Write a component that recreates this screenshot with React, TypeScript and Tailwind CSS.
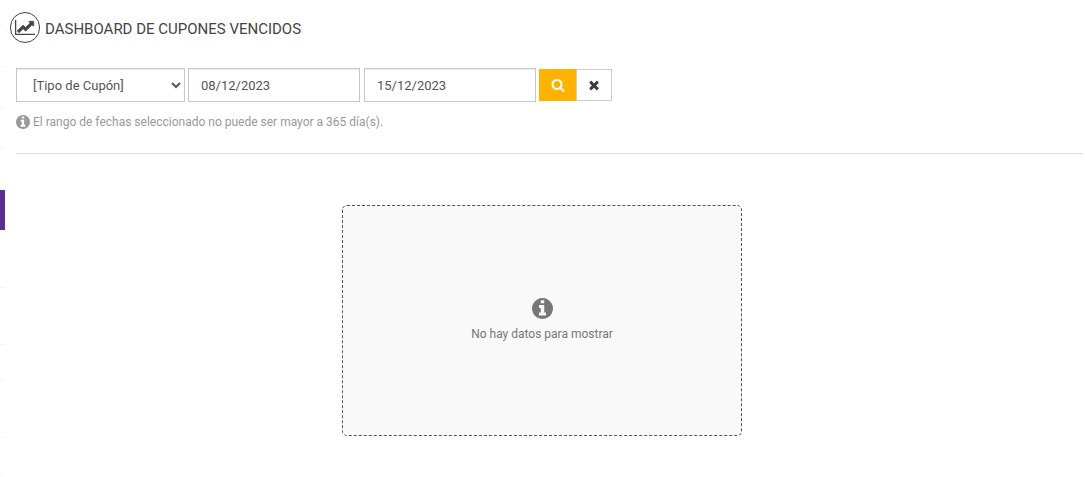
import React from "react";

type IconProps = { className?: string };

function LineChartIcon({ className }: IconProps) {
  return (
    <svg viewBox="0 0 2048 1536" className={className} fill="currentColor" aria-hidden="true">
      <path d="M2048 1408v128H0V0h128v1408z" />
      <path
        stroke="currentColor"
        strokeWidth="70"
        d="M1920 160v435q0 21-19.500 29.500T1865 617l-121-121-633 633q-10 10-23 10t-23-10L832 896l-416 416-192-192 585-585q10-10 23-10t23 10l233 233 464-464-121-121q-16-16-7.500-35.500T1453 128h435q14 0 23 9t9 23z"
      />
    </svg>
  );
}

function SearchIcon({ className }: IconProps) {
  return (
    <svg viewBox="0 0 1792 1792" className={className} fill="currentColor" aria-hidden="true">
      <path d="M1216 832q0-185-131.500-316.500T768 384 451.500 515.500 320 832t131.500 316.500T768 1280t316.500-131.500T1216 832zm512 832q0 52-38 90t-90 38q-54 0-90-38l-343-342q-179 124-399 124-143 0-273.500-55.500t-225-150-150-225T64 832t55.500-273.500 150-225 225-150T768 128t273.500 55.500 225 150 150 225T1472 832q0 220-124 399l343 343q37 37 37 90z" />
    </svg>
  );
}

function TimesIcon({ className }: IconProps) {
  return (
    <svg viewBox="0 0 1792 1792" className={className} fill="currentColor" aria-hidden="true">
      <path d="M1490 1322q0 40-28 68l-136 136q-28 28-68 28t-68-28l-294-294-294 294q-28 28-68 28t-68-28l-136-136q-28-28-28-68t28-68l294-294-294-294q-28-28-28-68t28-68l136-136q28-28 68-28t68 28l294 294 294-294q28-28 68-28t68 28l136 136q28 28 28 68t-28 68l-294 294 294 294q28 28 28 68z" />
    </svg>
  );
}

function InfoIcon({ className }: IconProps) {
  return (
    <svg viewBox="128 128 1536 1536" className={className} fill="currentColor" aria-hidden="true">
      <path d="M1152 1376v-160q0-14-9-23t-23-9h-96v-512q0-14-9-23t-23-9h-320q-14 0-23 9t-9 23v160q0 14 9 23t23 9h96v320h-96q-14 0-23 9t-9 23v160q0 14 9 23t23 9h448q14 0 23-9t9-23zm-128-896v-160q0-14-9-23t-23-9h-192q-14 0-23 9t-9 23v160q0 14 9 23t23 9h192q14 0 23-9t9-23zm640 416q0 209-103 385.500t-279.500 279.500-385.500 103-385.500-103-279.500-279.500-103-385.500 103-385.500 279.500-279.500 385.500-103 385.500 103 279.500 279.500 103 385.500z" />
    </svg>
  );
}

function SidebarEdge() {
  return (
    <div className="flex w-[5px] shrink-0 flex-col" aria-hidden="true">
      <div className="h-[26px] border-b border-[#f5f5f5]" />
      <div className="h-[41px] border-b border-[#f5f5f5]" />
      <div className="h-[41px] border-b border-[#f5f5f5]" />
      <div className="h-[41px] border-b border-[#f5f5f5]" />
      <div className="mt-[41px] h-10 bg-[#5c2d91]" />
      <div className="h-[58px] border-b border-[#f5f5f5]" />
      <div className="h-[57px] border-b border-[#f5f5f5]" />
      <div className="h-9 border-b border-[#f5f5f5]" />
      <div className="h-[57px] border-b border-[#f5f5f5]" />
      <div className="h-9 border-b border-[#f5f5f5]" />
    </div>
  );
}

const field =
  "h-[34px] rounded-none border border-[#c8c8c8] bg-white px-3 text-[13px] text-[#555] shadow-[inset_0_1px_1px_rgba(0,0,0,0.075)] outline-none";

export default function App() {
  return (
    <div className="flex min-h-screen bg-white font-['Roboto',sans-serif] text-[#444]">
      <SidebarEdge />
      <main className="min-w-0 flex-1">
        <header className="flex items-center gap-[5px] pt-3 pl-[5px]">
          <span className="flex h-[31px] w-[30px] items-center justify-center rounded-full border border-[#444]">
            <LineChartIcon className="h-[15px] w-5" />
          </span>
          <h1 className="pt-[2px] text-[15px] leading-5">DASHBOARD DE CUPONES VENCIDOS</h1>
        </header>

        <form
          className="mt-[25px] flex flex-wrap items-center gap-[3px] pl-[11px]"
          onSubmit={(event) => event.preventDefault()}
        >
          <select aria-label="Tipo de Cupón" className={`${field} w-[169px]`}>
            <option>[Tipo de Cupón]</option>
          </select>
          <div className="flex gap-1">
            <input
              type="text"
              aria-label="Fecha desde"
              defaultValue="08/12/2023"
              className={`${field} w-[172px]`}
            />
            <input
              type="text"
              aria-label="Fecha hasta"
              defaultValue="15/12/2023"
              className={`${field} w-[172px]`}
            />
          </div>
          <div className="flex h-8">
            <button
              type="submit"
              aria-label="Buscar"
              className="flex w-[37px] items-center justify-center bg-[#ffb300] text-white"
            >
              <SearchIcon className="size-[14px]" />
            </button>
            <button
              type="button"
              aria-label="Limpiar"
              className="flex w-9 items-center justify-center border border-[#ccc] bg-white text-[#3c3c3c]"
            >
              <TimesIcon className="size-[14px]" />
            </button>
          </div>
        </form>

        <p className="mt-3 flex items-center gap-[3px] pl-[11px] text-xs leading-4 text-[#999]">
          <InfoIcon className="size-[14px]" />
          El rango de fechas seleccionado no puede ser mayor a 365 día(s).
        </p>

        <hr className="mt-[23px] mr-[2px] ml-[11px] border-[#ddd]" />

        <section className="mt-[51px] flex justify-center pr-[6px]">
          <div className="flex w-full max-w-[400px] flex-col items-center rounded-[5px] border border-dashed border-[#555] bg-[#f9f9f9] pt-[92px] pb-[93px] text-[#777]">
            <InfoIcon className="size-[21px]" />
            <p className="mt-[7px] text-xs leading-4">No hay datos para mostrar</p>
          </div>
        </section>
      </main>
    </div>
  );
}
